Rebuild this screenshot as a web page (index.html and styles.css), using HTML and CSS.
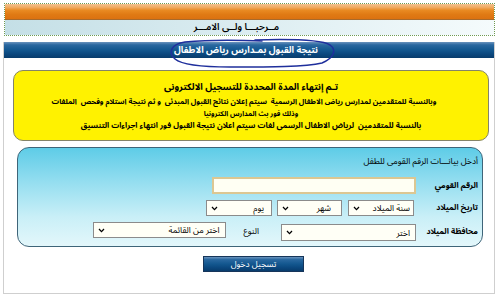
FILE: index.html
```html
<!DOCTYPE html>
<html lang="ar" dir="rtl">
<head>
<meta charset="utf-8">
<title>نتيجة القبول</title>
<link rel="stylesheet" href="styles.css">
</head>
<body>
<div class="page">
  <div class="header">
    <div class="header__orange"></div>
    <div class="header__welcome">مــرحبـــا ولــى الامـــر</div>
  </div>

  <div class="panel">
    <div class="title-bar">نتيجة القبول بمـدارس رياض الاطفال</div>

    <div class="notice">
      <p class="notice__head">تـم إنتهاء المدة المحددة للتسجيل الالكترونى</p>
      <p class="notice__line notice__line--wide">وبالنسبة للمتقدمين لمدارس رياض الاطفال الرسمية&nbsp; سيتم إعلان نتائج القبول المبدئى&nbsp; و ثم نتيجة استلام وفحص&nbsp; الملفات</p>
      <p class="notice__line">وذلك فور بث المدارس الكترونيا</p>
      <p class="notice__line notice__line--last">بالنسبة للمتقدمين&nbsp; لرياض الاطفال الرسمى لغات سيتم اعلان نتيجة القبول فور انتهاء اجراءات التنسيق</p>
    </div>

    <div class="form-box">
      <div class="form-box__title">أدخل بيانـــات الرقم القومى للطفل</div>

      <div class="form-row form-row--id">
        <label class="form-row__label" for="nid">الرقم القومي</label>
        <input class="text-input" id="nid" type="text">
      </div>

      <div class="form-row form-row--dob">
        <span class="form-row__label">تاريخ الميلاد</span>
        <span class="select select--year"><select><option>سنة الميلاد</option></select><svg class="select__arrow" viewBox="0 0 7 5"><path d="M1 1 L3.5 3.6 L6 1" fill="none" stroke="#000" stroke-width="1.3"/></svg></span>
        <span class="select select--month"><select><option>شهر</option></select><svg class="select__arrow" viewBox="0 0 7 5"><path d="M1 1 L3.5 3.6 L6 1" fill="none" stroke="#000" stroke-width="1.3"/></svg></span>
        <span class="select select--day"><select><option>يوم</option></select><svg class="select__arrow" viewBox="0 0 7 5"><path d="M1 1 L3.5 3.6 L6 1" fill="none" stroke="#000" stroke-width="1.3"/></svg></span>
      </div>

      <div class="form-row form-row--place">
        <span class="form-row__label">محافظة الميلاد</span>
        <span class="select select--gov"><select><option>اختر</option></select><svg class="select__arrow" viewBox="0 0 7 5"><path d="M1 1 L3.5 3.6 L6 1" fill="none" stroke="#000" stroke-width="1.3"/></svg></span>
        <span class="form-row__label form-row__label--gender">النوع</span>
        <span class="select select--gender"><select><option>اختر من القائمة</option></select><svg class="select__arrow" viewBox="0 0 7 5"><path d="M1 1 L3.5 3.6 L6 1" fill="none" stroke="#000" stroke-width="1.3"/></svg></span>
      </div>
    </div>

    <div class="actions">
      <button class="btn" type="button">تسجيل دخول</button>
    </div>
  </div>

  <svg class="scribble" viewBox="165 36 175 36" width="175" height="36">
    <path d="M255 40 C290 39 322 40 330 45 C337 50 334 58 322 63 C305 67 270 67 230 67 C200 67 182 65 175 59 C167 52 172 44 185 42 C205 40 240 40 262 41" fill="none" stroke="#1f2f9c" stroke-width="1.5" stroke-linecap="round"/>
  </svg>
</div>
</body>
</html>
```

FILE: styles.css
```css
* { box-sizing: border-box; }

html, body {
  margin: 0;
  padding: 0;
  background: #ffffff;
}

body {
  font-family: "Noto Sans Arabic", "DejaVu Sans", sans-serif;
  color: #000;
  direction: rtl;
}

.page {
  position: relative;
  width: 500px;
  height: 305px;
  padding: 3px 5px 0 4px;
}

/* ---------- header ---------- */
.header {
  width: 491px;
  border: 1px dotted #6f9a52;
}

.header__orange {
  height: 16px;
  background: linear-gradient(#f3c18f 0%, #f0ab62 22%, #e98a22 42%, #e07a14 70%, #dc7210 100%);
  border-bottom: 1px solid #a76a2c;
}

.header__welcome {
  height: 15px;
  background: linear-gradient(to right, #c4dfe6 0%, #dcedf1 50%, #f5fbfc 100%);
  font-size: 9.5px;
  font-weight: 600;
  line-height: 15px;
  text-align: center;
  padding-right: 26px;
}

/* ---------- panel ---------- */
.panel {
  margin-top: 6px;
  width: 492px;
  height: 252px;
  border: 1px solid #cfcfcf;
  border-top: none;
}

.title-bar {
  height: 16px;
  background: linear-gradient(#6a93bd 0%, #2a68a0 18%, #13578f 50%, #0b487f 75%, #083c6c 100%);
  color: #fff;
  font-weight: bold;
  font-size: 9.2px;
  line-height: 16px;
  text-align: center;
  padding-right: 6px;
}

.notice {
  margin: 12px 5px 0 9px;
  height: 71px;
  background: #fff200;
  border: 1px solid #858468;
  border-radius: 10px;
  padding-top: 10px;
  text-align: center;
  font-weight: bold;
}

.notice p {
  margin: 0;
  white-space: nowrap;
}

.notice__head {
  line-height: 13px;
  font-size: 9.3px;
  margin-bottom: 2px !important;
}

.notice__line {
  line-height: 12px;
  font-size: 7px;
}

.notice__line--wide {
  font-size: 7.4px;
  padding-right: 14px;
}

.notice__line--last {
  font-size: 7.8px;
}

/* ---------- form ---------- */
.form-box {
  margin: 6px 11px 0 13px;
  height: 100px;
  border: 1px solid #3f6579;
  border-radius: 12px;
  background: linear-gradient(#5ecce7 0%, #95def0 35%, #c9eff7 70%, #e3f7fb 100%);
  padding: 6px 4px 0 0;
  font-size: 8.5px;
}

.form-box__title {
  line-height: 14px;
  height: 14px;
  margin-bottom: 9px;
}

.form-row {
  display: flex;
  align-items: center;
}

.form-row__label {
  width: 62px;
  flex: none;
  line-height: 12px;
  font-weight: bold;
  font-size: 8px;
}

.form-row--id {
  height: 17px;
}

.form-row--dob {
  height: 16px;
  margin-top: 6px;
}

.form-row--place {
  height: 19px;
  margin-top: 6px;
}

.text-input {
  width: 204px;
  height: 17px;
  border: 2px solid #dcc792;
  background: #fffff3;
  padding: 0;
  margin: 0;
  font: inherit;
}

.select {
  display: inline-flex;
  align-items: center;
  height: 16px;
  border: 1px solid #8b8b8b;
  background: #fffff6;
  flex: none;
}

.select select {
  appearance: none;
  -webkit-appearance: none;
  border: none;
  background: transparent;
  font: inherit;
  font-size: 8.5px;
  height: 14px;
  line-height: 14px;
  padding: 0 3px 0 0;
  margin: 0;
  flex: 1;
  min-width: 0;
  color: #000;
  direction: rtl;
}

.select__arrow {
  width: 7px;
  height: 5px;
  margin: 0 5px 0 4px;
  flex: none;
}

.select--year { width: 66px; margin-right: 2px; }
.select--month { width: 65px; margin-right: 6px; }
.select--month select { padding-right: 10px; }
.select--day { width: 66px; margin-right: 5px; }
.select--day select { padding-right: 7px; }

.select--gov { width: 135px; align-self: flex-end; height: 17px; }
.select--gov select { padding-right: 5px; }

.form-row__label--gender {
  width: auto;
  margin: 0 22px 0 0;
  align-self: flex-start;
  padding-top: 3px;
  font-weight: normal;
  font-size: 8.5px;
}

.select--gender {
  width: 133px;
  align-self: flex-start;
  margin-right: 18px;
}
.select--gender select { padding-right: 5px; }

/* ---------- actions ---------- */
.actions {
  margin-top: 9px;
  padding-left: 199px;
  display: flex;
  direction: ltr;
}

.btn {
  width: 101px;
  height: 16px;
  border: 1px solid #16355a;
  background: linear-gradient(#6a93bd 0%, #2a68a0 18%, #13578f 50%, #0b487f 75%, #083c6c 100%);
  color: #fff;
  font: inherit;
  font-size: 8.5px;
  line-height: 13px;
  padding: 0;
  text-align: center;
  direction: rtl;
}

/* hand-drawn annotation over the title */
.scribble {
  position: absolute;
  left: 165px;
  top: 36px;
  pointer-events: none;
}
```
